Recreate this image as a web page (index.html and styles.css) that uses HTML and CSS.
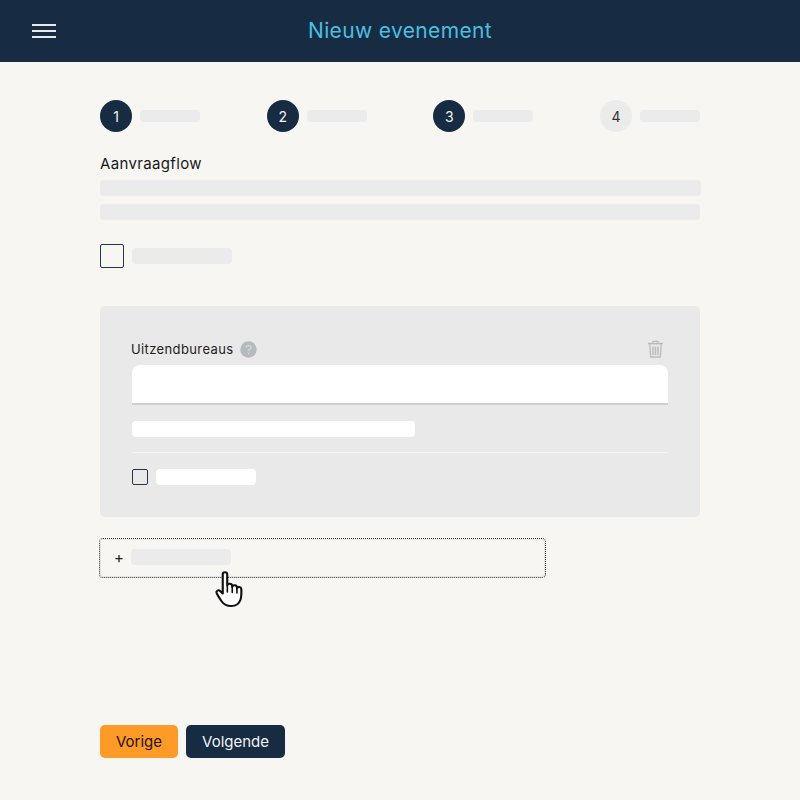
FILE: index.html
```html
<!DOCTYPE html>
<html lang="nl">
<head>
<meta charset="utf-8">
<title>Nieuw evenement</title>
<link rel="stylesheet" href="styles.css">
</head>
<body>
<header class="topbar">
  <button class="menu" aria-label="Menu"><span></span><span></span><span></span></button>
  <h1 class="title">Nieuw evenement</h1>
</header>
<main class="content">
  <ol class="steps">
    <li class="step"><span class="num">1</span><span class="sk sk-step"></span></li>
    <li class="step"><span class="num">2</span><span class="sk sk-step"></span></li>
    <li class="step"><span class="num">3</span><span class="sk sk-step"></span></li>
    <li class="step todo"><span class="num">4</span><span class="sk sk-step"></span></li>
  </ol>
  <div class="flow-label">Aanvraagflow</div>
  <div class="sk sk-line sk-first"></div>
  <div class="sk sk-line"></div>
  <div class="check-row">
    <span class="check"></span><span class="sk sk-check"></span>
  </div>
  <section class="card">
    <div class="card-head">
      <div class="card-title">
        <span class="card-label">Uitzendbureaus</span>
        <svg class="help" width="17" height="17" viewBox="0 0 17 17"><circle cx="8.5" cy="8.5" r="8.2" fill="#b4babd"/><path d="M6.1 6.6c.1-1.4 1.1-2.2 2.5-2.2s2.4.8 2.4 2c0 1-.6 1.4-1.3 1.9-.7.5-1 .8-1 1.6" fill="none" stroke="#d2d5d6" stroke-width="1.5"/><circle cx="8.6" cy="12.4" r=".95" fill="#d2d5d6"/></svg>
      </div>
      <svg class="trash" width="17" height="18" viewBox="0 0 17 18" fill="none" stroke="#b9bcbd"><path d="M1 3.6h15" stroke-width="1.6"/><path d="M6 3.2V1.4h5v1.800" stroke-width="1.2"/><path d="M2.800 4.500l.9 12.500h9.600l.9-12.500" stroke-width="1.3"/><path d="M6 6.500v8.600M8.500 6.500v8.600M11 6.500v8.600" stroke-width="1.500"/></svg>
    </div>
    <div class="input"></div>
    <div class="sk-white sk-wide"></div>
    <hr class="divider">
    <div class="card-check">
      <span class="check check-small"></span><span class="sk-white sk-check"></span>
    </div>
  </section>
  <button class="add"><span class="plus">+</span><span class="sk sk-check"></span></button>
  <div class="actions">
    <button class="btn btn-prev">Vorige</button>
    <button class="btn btn-next">Volgende</button>
  </div>
</main>
<svg class="cursor" width="32" height="38" viewBox="0 0 30 38" preserveAspectRatio="none"><path d="M8.200 3.400c0-3 4.200-3 4.200 0v11.200c.4-2.600 4.400-2.400 4.600.2l.1 1c.4-2.400 4.200-2.100 4.400.4l.1 1.100c.5-2 3.900-1.600 4 .8.2 3.900.2 7.600-.8 10.600-1.200 3.700-3.800 6.200-8.400 6.300-4.400.1-7-1.400-9.300-4.800-1.600-2.400-3.300-5.300-4.600-8-.9-2 1.500-3.800 3.200-2.200l2.500 2.500z" fill="#fff" stroke="#111" stroke-width="2" stroke-linejoin="round"/><path d="M12.500 15v6M17.100 16v5.500M21.500 17.500v4.500" fill="none" stroke="#111" stroke-width="1.500" stroke-linecap="round"/></svg>
</body>
</html>
```
FILE: styles.css
```css
* { box-sizing: border-box; }
html, body { margin: 0; height: 100%; }
body {
  position: relative;
  background: #f7f6f2;
  font-family: Inter, "Liberation Sans", sans-serif;
  color: #17181a;
  overflow: hidden;
}
.topbar {
  height: 62px;
  background: #172b42;
  position: relative;
  display: flex;
  align-items: center;
  justify-content: center;
}
.menu {
  position: absolute;
  left: 32px;
  top: 24px;
  width: 24px;
  height: 14px;
  padding: 0;
  border: 0;
  background: none;
  display: flex;
  flex-direction: column;
  justify-content: space-between;
}
.menu span { display: block; height: 2px; background: #e8e9ea; }
.title {
  margin: 0 0 2px;
  font-size: 21px;
  font-weight: 400;
  letter-spacing: 0.35px;
  color: #4bbfe0;
}
.content {
  width: 600px;
  margin: 0 auto;
  padding-top: 38px;
}
.steps {
  list-style: none;
  margin: 0;
  padding: 0;
  display: flex;
  justify-content: space-between;
}
.step { display: flex; align-items: center; gap: 8px; }
.num {
  width: 32px;
  height: 32px;
  border-radius: 50%;
  background: #172b42;
  color: #f2f3f4;
  font-size: 14px;
  display: flex;
  align-items: center;
  justify-content: center;
}
.todo .num { background: #ebebeb; color: #333; }
.sk { display: block; background: #ecebec; border-radius: 4px; }
.sk-step { width: 60px; height: 12px; }
.flow-label {
  margin-top: 21px;
  font-size: 15px;
  letter-spacing: 0.35px;
  line-height: 22px;
  height: 22px;
}
.sk-line { height: 16px; margin-top: 8px; }
.sk-first { margin-top: 5px; margin-right: -1px; }
.check-row {
  margin-top: 24px;
  display: flex;
  align-items: center;
  gap: 8px;
}
.check {
  width: 24px;
  height: 24px;
  border: 1px solid #23364b;
  border-radius: 2px;
  background: #f7f6f2;
}
.sk-check { width: 100px; height: 16px; }
.card {
  margin-top: 38px;
  height: 211px;
  background: #e9e9e9;
  border-radius: 5px;
  padding: 34px 36px 0 32px;
}
.card-head {
  display: flex;
  justify-content: space-between;
  align-items: center;
  height: 19px;
}
.card-title { display: flex; align-items: center; gap: 7px; margin-left: -1px; }
.card-label { font-size: 13px; letter-spacing: 0.38px; color: #222; margin-top: -1px; }
.help { display: block; }
.trash { display: block; margin-top: -2px; }
.input {
  margin: 6px -4px 0 0;
  height: 40px;
  background: #fff;
  border-radius: 8px 8px 0 0;
  border-bottom: 2px solid #cfd0d1;
}
.sk-white { display: block; background: #fff; border-radius: 4px; }
.sk-wide { width: 283px; height: 16px; margin-top: 16px; }
.divider {
  margin: 15px -4px 0 0;
  border: 0;
  height: 1px;
  background: #f6f6f6;
}
.card-check {
  margin-top: 16px;
  display: flex;
  align-items: center;
  gap: 8px;
}
.check-small { width: 16px; height: 16px; background: #e9e9e9; }
.add {
  margin-top: 21px;
  margin-left: -1px;
  width: 447px;
  height: 40px;
  padding: 0 0 2px 14px;
  display: flex;
  align-items: center;
  gap: 7px;
  background: none;
  border: 1px dotted #333;
  border-radius: 4px;
  box-shadow: inset 0 0 0 1px rgba(0, 0, 0, 0.07);
  font-family: inherit;
}
.plus { font-size: 15px; color: #222; width: 10px; }
.actions {
  margin-top: 147px;
  display: flex;
  gap: 8px;
}
.btn {
  height: 33px;
  padding: 0 16px;
  border: 0;
  border-radius: 5px;
  font-family: inherit;
  font-size: 15px;
}
.btn-prev { background: #fe9a27; color: #23130a; }
.btn-next { background: #172b42; color: #f2f3f4; }
.cursor { position: absolute; left: 214px; top: 571px; }
```
